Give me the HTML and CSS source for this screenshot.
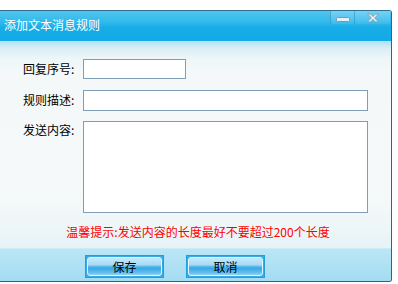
FILE: index.html
```html
<!DOCTYPE html>
<html lang="zh">
<head>
<meta charset="utf-8">
<title>添加文本消息规则</title>
<link rel="stylesheet" href="styles.css">
</head>
<body>
<div class="window">
  <div class="titlebar">
    <div class="title">添加文本消息规则</div>
    <div class="controls">
      <div class="ctl ctl-min">
        <svg width="14" height="6" viewBox="0 0 14 6"><rect x="0.5" y="0.5" width="13" height="4" rx="1" fill="#e8eef2" stroke="#7a98ad"/></svg>
      </div>
      <div class="ctl ctl-close">
        <svg width="14" height="10" viewBox="0 0 14 10"><path d="M1.5 1 L4.5 1 L7 3.6 L9.5 1 L12.5 1 L8.7 5 L12.5 9 L9.5 9 L7 6.4 L4.5 9 L1.5 9 L5.3 5 Z" fill="#e8eef2" stroke="#7a98ad" stroke-width="0.8" stroke-linejoin="round"/></svg>
      </div>
    </div>
  </div>
  <div class="content">
    <div class="form">
      <label class="lbl">回复序号:</label>
      <input class="field field-short" type="text">
      <label class="lbl">规则描述:</label>
      <input class="field field-long" type="text">
      <label class="lbl lbl-top">发送内容:</label>
      <textarea class="field area"></textarea>
    </div>
    <div class="tip">温馨提示:发送内容的长度最好不要超过200个长度</div>
  </div>
  <div class="footer">
    <button class="btn"><span>保存</span></button>
    <button class="btn"><span>取消</span></button>
  </div>
</div>
</body>
</html>
```

FILE: styles.css
```css
html, body {
  margin: 0;
  padding: 0;
  background: #ffffff;
}
body {
  font-family: "Noto Sans CJK SC", "Liberation Sans", sans-serif;
  font-size: 12px;
  color: #000;
}
.window {
  margin-top: 10px;
  width: 391px;
  height: 270px;
  border-top: 1px solid #2e6f8e;
  border-right: 1px solid #2a6686;
  border-bottom: 1px solid #2a6686;
  border-top-right-radius: 3px;
  border-bottom-right-radius: 3px;
  display: flex;
  flex-direction: column;
  overflow: hidden;
}
.titlebar {
  height: 30px;
  flex: none;
  display: flex;
  align-items: flex-start;
  justify-content: space-between;
  background: linear-gradient(#50c5ef 0%, #33baec 35%, #18ade7 55%, #12a9e6 100%);
}
.title {
  color: #fff;
  font-size: 12px;
  line-height: 28px;
  padding-left: 4px;
  letter-spacing: 0;
}
.controls {
  display: flex;
  height: 13px;
  margin-right: 1px;
}
.ctl {
  display: flex;
  align-items: center;
  justify-content: center;
  height: 13px;
  background: linear-gradient(rgba(255,255,255,0.22), rgba(255,255,255,0.08));
  border-left: 1px solid rgba(40,120,170,0.45);
  border-bottom-left-radius: 2px;
  border-bottom-right-radius: 2px;
}
.ctl-min {
  width: 24px;
  padding-top: 5px;
  box-sizing: border-box;
}
.ctl-close {
  width: 35px;
}
.content {
  flex: 1;
  display: flex;
  flex-direction: column;
  background: linear-gradient(#b2e1f3 0px, #dceff6 8px, #eef6f8 18px, #f4f8f9 30px, #f6f9fa 150px, #eef6f8 185px, #e6f3f7 206px);
}
.form {
  display: grid;
  grid-template-columns: 60px 1fr;
  row-gap: 10px;
  padding: 18px 0 0 23px;
  align-items: center;
}
.lbl {
  line-height: 16px;
  white-space: nowrap;
}
.lbl-top {
  align-self: start;
  padding-top: 1px;
}
.field {
  box-sizing: border-box;
  border: 1px solid #7f9db9;
  background: #fff;
  margin: 0;
  padding: 0;
  font: inherit;
}
.field-short {
  width: 103px;
  height: 20px;
}
.field-long {
  width: 285px;
  height: 21px;
  margin-top: 1px;
}
.area {
  width: 285px;
  height: 92px;
  resize: none;
}
.tip {
  color: #ff0000;
  text-align: center;
  padding-left: 5px;
  margin-top: 11px;
  line-height: 16px;
}
.footer {
  height: 33px;
  flex: none;
  display: flex;
  align-items: flex-start;
  padding-left: 85px;
  padding-top: 6px;
  box-sizing: border-box;
  gap: 22px;
  background: linear-gradient(#bce6f6, #a3dcf2);
  border-top: 1px solid #c9ecf8;
}
.btn {
  width: 79px;
  height: 23px;
  box-sizing: border-box;
  padding: 1px;
  margin: 0;
  border: 1px solid #1f9fe0;
  background: #38ace6;
  font: inherit;
  color: #000;
  display: flex;
}
.btn span {
  flex: 1;
  display: flex;
  align-items: center;
  justify-content: center;
  border: 1px solid #e3f5fd;
  border-radius: 3px;
  background: linear-gradient(#c3e9fa 0%, #a6dbf5 40%, #4fb4e8 52%, #3aa9e4 62%, #62bdec 85%, #8fd1f2 100%);
  font-size: 12px;
  line-height: 14px;
}
```
